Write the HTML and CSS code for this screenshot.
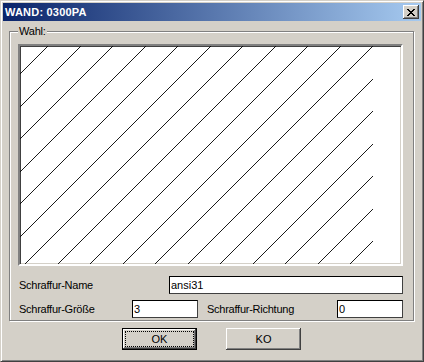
FILE: index.html
```html
<!DOCTYPE html>
<html lang="de">
<head>
  <meta charset="UTF-8" />
  <title>WAND: 0300PA</title>
  <link rel="stylesheet" href="styles.css">
</head>
<body>
  <div class="window">
    <div class="titlebar">
      <span class="title">WAND: 0300PA</span>
      <span class="close">
        <svg width="8" height="7" viewBox="0 0 8 7" shape-rendering="crispEdges">
          <path d="M0 0h2v1h-2zM6 0h2v1h-2zM1 1h2v1h-2zM5 1h2v1h-2zM2 2h4v1h-4zM3 3h2v1h-2zM2 4h4v1h-4zM1 5h2v1h-2zM5 5h2v1h-2zM0 6h2v1h-2zM6 6h2v1h-2z" fill="#000"/>
        </svg>
      </span>
    </div>

    <div class="content">
      <div class="group">
        <span class="legend">Wahl:</span>

        <div class="preview">
          <svg width="381" height="218" viewBox="0 0 381 218">
            <path stroke="#000" stroke-width="0.9" fill="none"
              d="M28 0L0 28 M61 0L0 61 M93 0L0 93 M126 0L0 126 M158 0L0 158 M191 0L0 191
                 M223 0L5 218 M256 0L38 218 M288 0L70 218 M321 0L103 218 M353 0L135 218
                 M353 33L168 218 M353 65L200 218 M353 98L233 218 M353 130L265 218
                 M353 163L298 218 M353 195L330 218"/>
          </svg>
        </div>

        <div class="row first">
          <label class="lbl lbl-name">Schraffur-Name</label>
          <input class="field field-wide" type="text" value="ansi31">
        </div>
        <div class="row">
          <label class="lbl lbl-size">Schraffur-Größe</label>
          <input class="field field-small" type="text" value="3">
          <label class="lbl lbl-dir">Schraffur-Richtung</label>
          <input class="field field-small" type="text" value="0">
        </div>
      </div>

      <div class="actions">
        <button class="btn default"><span class="btn-face focus">OK</span></button>
        <button class="btn"><span class="btn-face">KO</span></button>
      </div>
    </div>
  </div>
</body>
</html>
```

FILE: styles.css
```css
body {
  margin: 0;
  background-color: #d4d0c8;
  font-family: "Liberation Sans", Arial, sans-serif;
  font-size: 11px;
  color: #000;
}
.window {
  width: 424px;
  height: 362px;
  box-sizing: border-box;
  border: 1px solid;
  border-color: #d4d0c8 #404040 #404040 #d4d0c8;
  box-shadow: inset 1px 1px #fff, inset -1px -1px #808080;
  padding: 2px;
  background-color: #d4d0c8;
}
.titlebar {
  height: 18px;
  padding: 0 2px;
  display: flex;
  align-items: center;
  justify-content: space-between;
  background: linear-gradient(to right, #0a246a, #a6caf0);
  color: #fff;
}
.title {
  font-weight: bold;
  font-size: 11px;
  letter-spacing: 0.2px;
}
.close {
  width: 16px;
  height: 14px;
  box-sizing: border-box;
  display: flex;
  align-items: center;
  justify-content: center;
  background-color: #d4d0c8;
  box-shadow: inset -1px -1px #404040, inset 1px 1px #fff, inset -2px -2px #808080;
}
.content {
  padding: 10px 7px 0 6px;
}
.group {
  position: relative;
  border: 1px solid #808080;
  box-shadow: 1px 1px 0 #fff, inset 1px 1px 0 #fff;
  padding: 12px 8px 2px 8px;
}
.legend {
  position: absolute;
  top: -7px;
  left: 8px;
  padding: 0 1px;
  line-height: 13px;
  background-color: #d4d0c8;
  letter-spacing: -0.2px;
}
.preview {
  width: 385px;
  height: 222px;
  box-sizing: border-box;
  border: 2px solid;
  border-color: #808080 #fff #fff #808080;
  box-shadow: inset 1px 1px #404040, inset -1px -1px #d4d0c8;
  background-color: #fff;
}
.preview svg {
  display: block;
}
.row {
  display: flex;
  align-items: center;
  padding-left: 1px;
  margin-top: 6px;
}
.row.first {
  margin-top: 10px;
}
.lbl {
  letter-spacing: -0.25px;
}
.lbl-name {
  width: 150px;
}
.lbl-size {
  width: 113px;
}
.lbl-dir {
  width: 130px;
  margin-left: 9px;
}
.field {
  height: 18px;
  box-sizing: border-box;
  margin: 0;
  padding: 0 1px;
  border: 1px solid #000;
  border-color: #000 #404040 #404040 #000;
  background-color: #fff;
  font-family: "Liberation Sans", Arial, sans-serif;
  font-size: 11px;
  color: #000;
  outline: none;
}
.field-wide {
  width: 234px;
}
.field-small {
  width: 66px;
}
.actions {
  display: flex;
  justify-content: center;
  gap: 29px;
  margin-top: 7px;
}
.btn {
  width: 75px;
  height: 22px;
  box-sizing: border-box;
  padding: 2px;
  border: none;
  background-color: #d4d0c8;
  box-shadow: inset -1px -1px #404040, inset 1px 1px #fff, inset -2px -2px #808080;
  font-family: "Liberation Sans", Arial, sans-serif;
  font-size: 11px;
  color: #000;
}
.btn.default {
  border: 1px solid #000;
  padding: 2px;
}
.btn-face {
  display: flex;
  height: 100%;
  box-sizing: border-box;
  align-items: center;
  justify-content: center;
  border: 1px solid transparent;
}
.btn-face.focus {
  border: 1px dotted #000;
}
```
